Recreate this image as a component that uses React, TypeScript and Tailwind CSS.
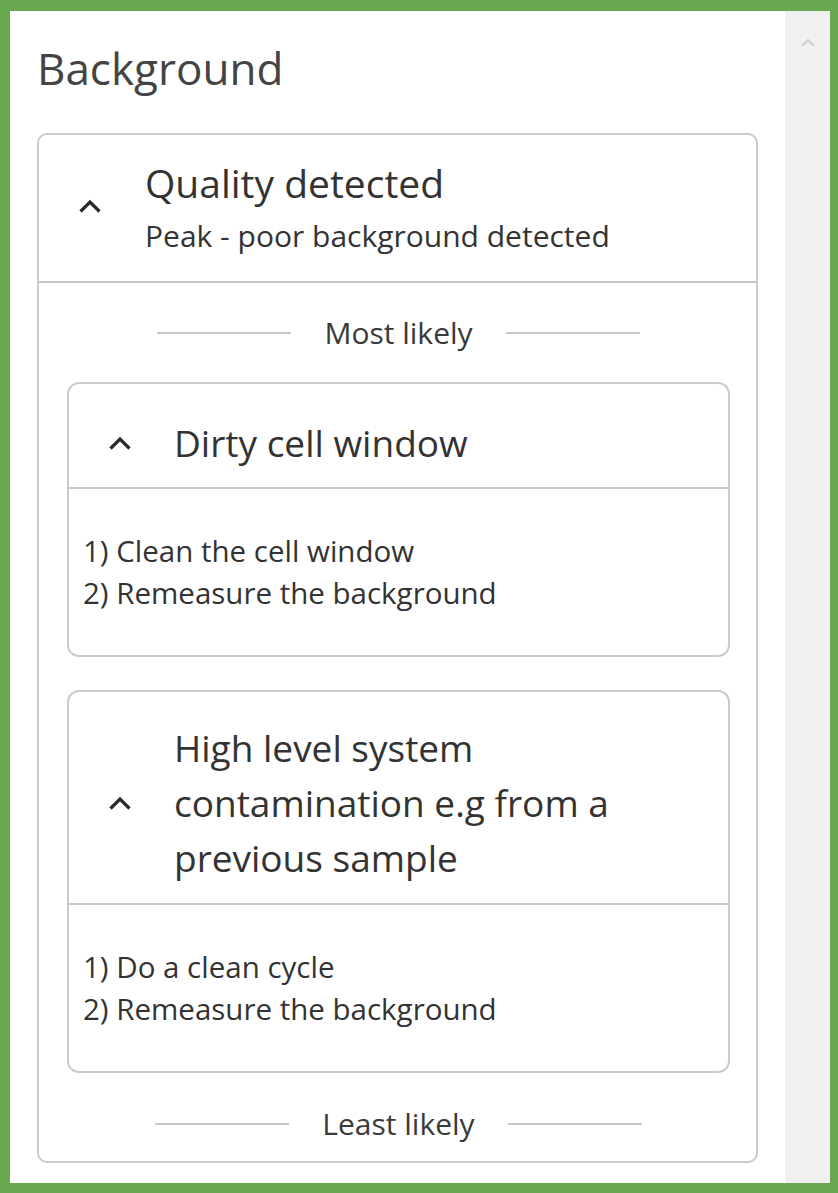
const font = { fontFamily: '"Open Sans", "Noto Sans", sans-serif' };

function Caret() {
  return (
    <svg width="24" height="16" viewBox="0 0 24 16" className="shrink-0">
      <polyline points="2.5,13.5 12,4 21.5,13.5" fill="none" stroke="#2a2a2a" strokeWidth="3.2" strokeLinejoin="miter" />
    </svg>
  );
}

function Divider({ label }: { label: string }) {
  return (
    <div className="flex items-center justify-center gap-[33px]">
      <div className="w-[134px] h-[2px] bg-[#c8c8c8]" />
      <span className="text-[30px] leading-[36px] text-[#3a3a3a]">{label}</span>
      <div className="w-[134px] h-[2px] bg-[#c8c8c8]" />
    </div>
  );
}

function Card({
  title,
  steps,
  headerClass,
  titleClass,
  className,
}: {
  title: string;
  steps: string[];
  headerClass: string;
  titleClass: string;
  className?: string;
}) {
  return (
    <div className={`border-2 border-[#cbcbcb] rounded-[12px] ${className ?? ""}`}>
      <div className={`flex items-center pl-[39px] pr-[20px] border-b-2 border-[#c8c8c8] ${headerClass}`}>
        <Caret />
        <div className={`ml-[42px] text-[37px] text-[#333] ${titleClass}`}>{title}</div>
      </div>
      <div className="pl-[14px] py-[41px] text-[29.5px] leading-[42px] text-[#333]">
        {steps.map((s) => (
          <div key={s}>{s}</div>
        ))}
      </div>
    </div>
  );
}

export default function App() {
  return (
    <div style={font} className="w-[838px] h-[1193px] bg-[#6aa84f] pt-[11px] pl-[10px] pr-[8px] pb-[10px] flex">
      <div className="flex-1 bg-white flex overflow-hidden">
        <div className="flex-1 px-[27px]">
          <h1 className="mt-[31px] text-[44px] leading-[52px] text-[#444]">Background</h1>

          <div className="mt-[39px] border-2 border-[#cbcbcb] rounded-[10px]">
            <div className="flex items-center pl-[39px] pt-[22px] pb-[26px] border-b-2 border-[#c8c8c8]">
              <Caret />
              <div className="ml-[43px] flex flex-col">
                <span className="text-[39px] leading-[52px] text-[#333]">Quality detected</span>
                <span className="mt-[8px] text-[30px] leading-[38px] text-[#333]">
                  Peak - poor background detected
                </span>
              </div>
            </div>

            <div className="pl-[28px] pr-[26px] pb-[19px]">
              <div className="mt-[32px]">
                <Divider label="Most likely" />
              </div>

              <Card
                className="mt-[31px]"
                title="Dirty cell window"
                steps={["1) Clean the cell window", "2) Remeasure the background"]}
                headerClass="pt-[33px] pb-[18px]"
                titleClass="leading-[52px]"
              />

              <Card
                className="mt-[33px]"
                title="High level system contamination e.g from a previous sample"
                steps={["1) Do a clean cycle", "2) Remeasure the background"]}
                headerClass="pt-[28px] pb-[18px]"
                titleClass="leading-[55px]"
              />

              <div className="mt-[33px]">
                <Divider label="Least likely" />
              </div>
            </div>
          </div>
        </div>

        <div className="w-[45px] bg-[#f0f0f0] flex justify-center pt-[27px]">
          <svg width="16" height="10" viewBox="0 0 16 10">
            <polyline points="2,8 8,2 14,8" fill="none" stroke="#d0d0d0" strokeWidth="2" />
          </svg>
        </div>
      </div>
    </div>
  );
}
